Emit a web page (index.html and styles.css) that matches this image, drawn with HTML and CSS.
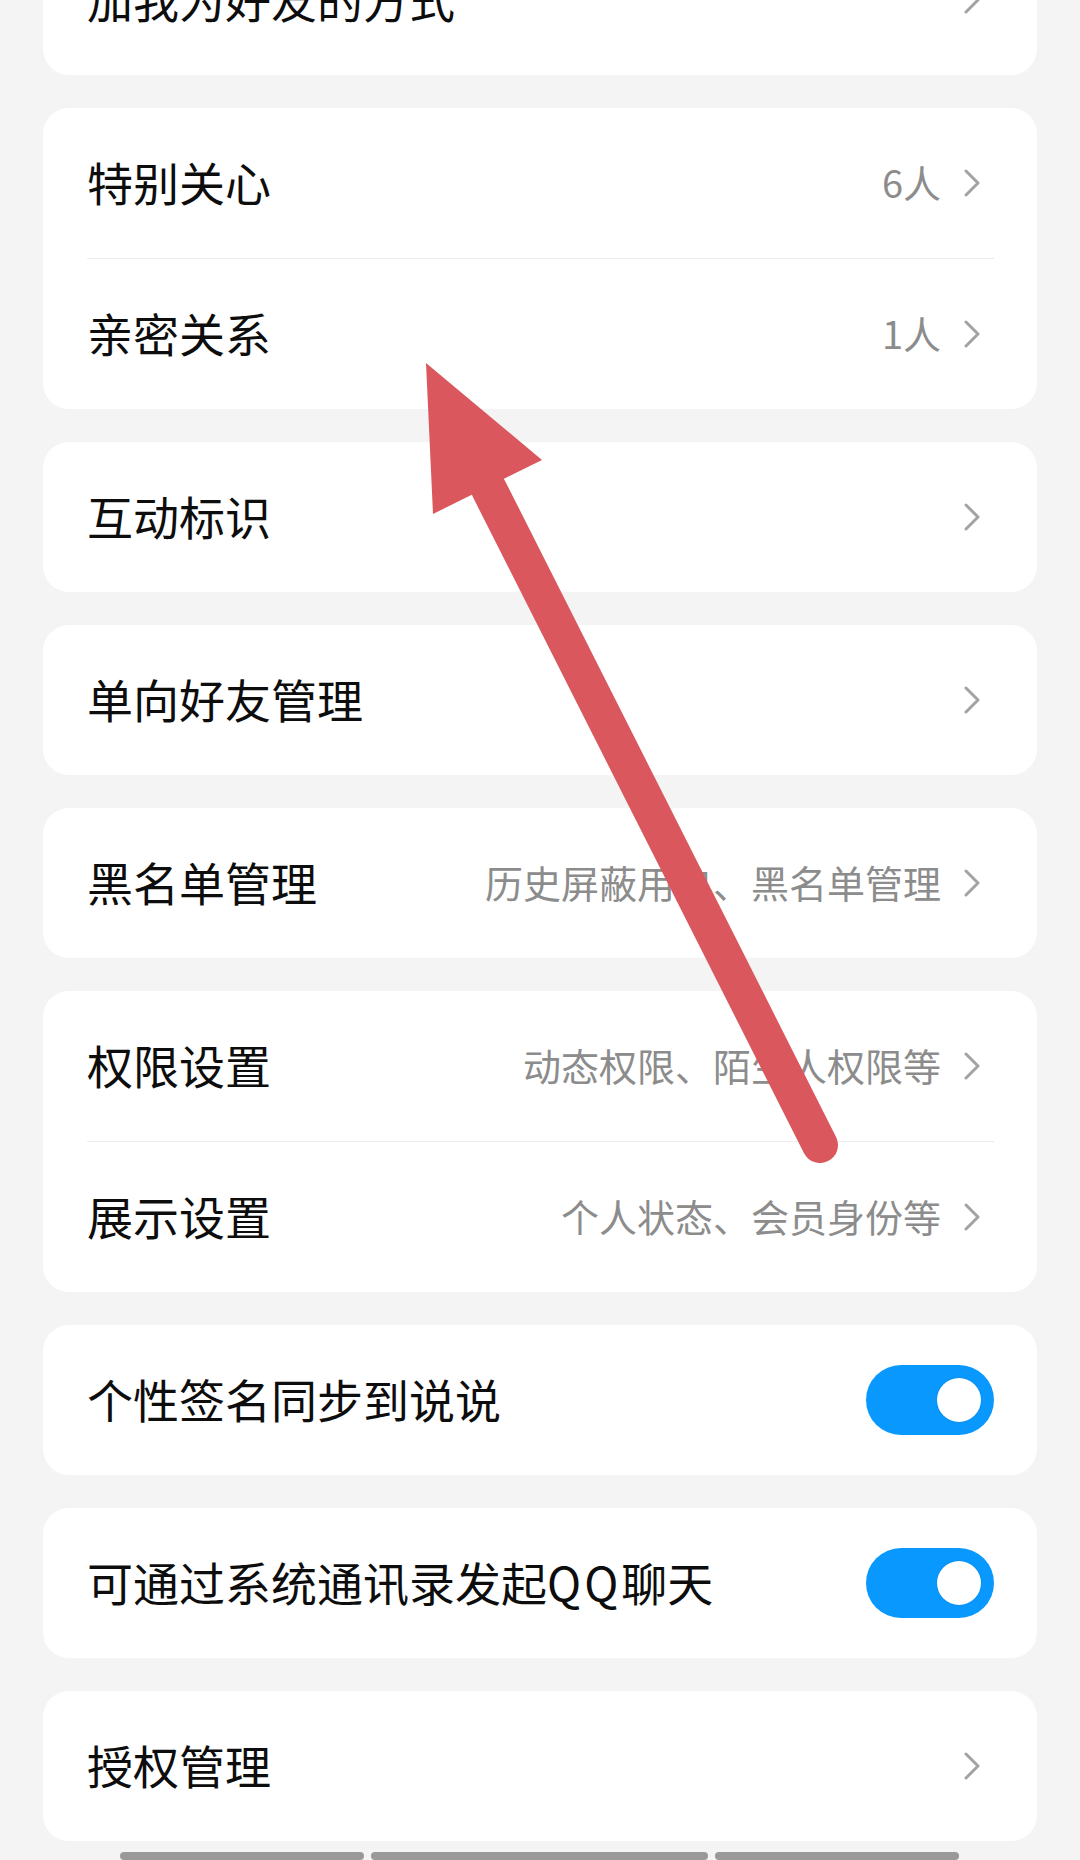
FILE: index.html
```html
<!DOCTYPE html>
<html lang="zh-CN">
<head>
    <meta charset="utf-8">
    <link rel="stylesheet" href="styles.css">
</head>
<body>
    <div class="screen">
        <div class="settings-list">
            <div class="group">
                <div class="row">
                    <span class="row-title">加我为好友的方式</span>
                    <svg class="chevron" viewBox="0 0 16 28"><polyline points="2,2 14,14 2,26"/></svg>
                </div>
            </div>

            <div class="group">
                <div class="row">
                    <span class="row-title">特别关心</span>
                    <span class="row-value">6人</span>
                    <svg class="chevron" viewBox="0 0 16 28"><polyline points="2,2 14,14 2,26"/></svg>
                </div>
                <div class="divider"></div>
                <div class="row">
                    <span class="row-title">亲密关系</span>
                    <span class="row-value">1人</span>
                    <svg class="chevron" viewBox="0 0 16 28"><polyline points="2,2 14,14 2,26"/></svg>
                </div>
            </div>

            <div class="group">
                <div class="row">
                    <span class="row-title">互动标识</span>
                    <svg class="chevron" viewBox="0 0 16 28"><polyline points="2,2 14,14 2,26"/></svg>
                </div>
            </div>

            <div class="group">
                <div class="row">
                    <span class="row-title">单向好友管理</span>
                    <svg class="chevron" viewBox="0 0 16 28"><polyline points="2,2 14,14 2,26"/></svg>
                </div>
            </div>

            <div class="group">
                <div class="row">
                    <span class="row-title">黑名单管理</span>
                    <span class="row-value">历史屏蔽用户、黑名单管理</span>
                    <svg class="chevron" viewBox="0 0 16 28"><polyline points="2,2 14,14 2,26"/></svg>
                </div>
            </div>

            <div class="group">
                <div class="row">
                    <span class="row-title">权限设置</span>
                    <span class="row-value">动态权限、陌生人权限等</span>
                    <svg class="chevron" viewBox="0 0 16 28"><polyline points="2,2 14,14 2,26"/></svg>
                </div>
                <div class="divider"></div>
                <div class="row">
                    <span class="row-title">展示设置</span>
                    <span class="row-value">个人状态、会员身份等</span>
                    <svg class="chevron" viewBox="0 0 16 28"><polyline points="2,2 14,14 2,26"/></svg>
                </div>
            </div>

            <div class="group">
                <div class="row">
                    <span class="row-title">个性签名同步到说说</span>
                    <div class="switch on"><div class="knob"></div></div>
                </div>
            </div>

            <div class="group">
                <div class="row">
                    <span class="row-title">可通过系统通讯录发起<span class="latin">QQ</span>聊天</span>
                    <div class="switch on"><div class="knob"></div></div>
                </div>
            </div>

            <div class="group">
                <div class="row">
                    <span class="row-title">授权管理</span>
                    <svg class="chevron" viewBox="0 0 16 28"><polyline points="2,2 14,14 2,26"/></svg>
                </div>
            </div>
        </div>

        <div class="scroll-bars">
            <div class="bar bar-short"></div>
            <div class="bar bar-long"></div>
            <div class="bar bar-short"></div>
        </div>

        <!-- annotation drawn over the screenshot -->
        <svg class="arrow-overlay" viewBox="0 0 1080 1860">
            <line x1="820" y1="1145" x2="489" y2="489" stroke="#d9575d" stroke-width="36" stroke-linecap="round"/>
            <polygon points="426,363 542,460 433,514" fill="#d9575d"/>
        </svg>
    </div>
</body>
</html>
```

FILE: styles.css
```css
body {
    margin: 0;
    padding: 0;
    background-color: #f4f4f4;
    font-family: "Noto Sans CJK SC", "Noto Sans", sans-serif;
}
.screen {
    position: relative;
    width: 1080px;
    height: 1860px;
    overflow: hidden;
}
.settings-list {
    display: flex;
    flex-direction: column;
    gap: 33px;
    padding: 0 43px;
    margin-top: -75px;
}
.group {
    background: #fff;
    border-radius: 26px;
}
.row {
    display: flex;
    align-items: center;
    height: 150px;
    padding: 0 43px 0 44px;
}
.row-title {
    flex: 1;
    font-size: 46px;
    line-height: 1;
    margin-top: -4px;
    color: #0d0d0d;
    white-space: nowrap;
}
.row-title .latin {
    letter-spacing: 3px;
}
.row-value {
    font-size: 38px;
    line-height: 1;
    margin-top: -3px;
    color: #8c8c8c;
    margin-right: 23px;
    white-space: nowrap;
}
.chevron {
    width: 16px;
    height: 28px;
    margin-right: 14px;
    fill: none;
    stroke: #a3a3a3;
    stroke-width: 3;
    stroke-linecap: round;
    stroke-linejoin: round;
}
.divider {
    height: 1px;
    margin: 0 43px 0 44px;
    background-color: #ececec;
}
.switch {
    width: 128px;
    height: 70px;
    border-radius: 35px;
    background-color: #0898fe;
    position: relative;
}
.switch .knob {
    position: absolute;
    top: 13px;
    right: 13px;
    width: 44px;
    height: 44px;
    border-radius: 50%;
    background: #fff;
    box-shadow: 0 0 2px rgba(0,0,0,0.15);
}
.scroll-bars {
    display: flex;
    gap: 7px;
    margin-top: 11px;
    padding-left: 120px;
}
.bar {
    height: 8px;
    border-radius: 4px;
    background-color: #999;
}
.bar-short {
    width: 244px;
}
.bar-long {
    width: 337px;
}
.arrow-overlay {
    position: absolute;
    top: 0;
    left: 0;
    width: 1080px;
    height: 1860px;
    pointer-events: none;
}
```
